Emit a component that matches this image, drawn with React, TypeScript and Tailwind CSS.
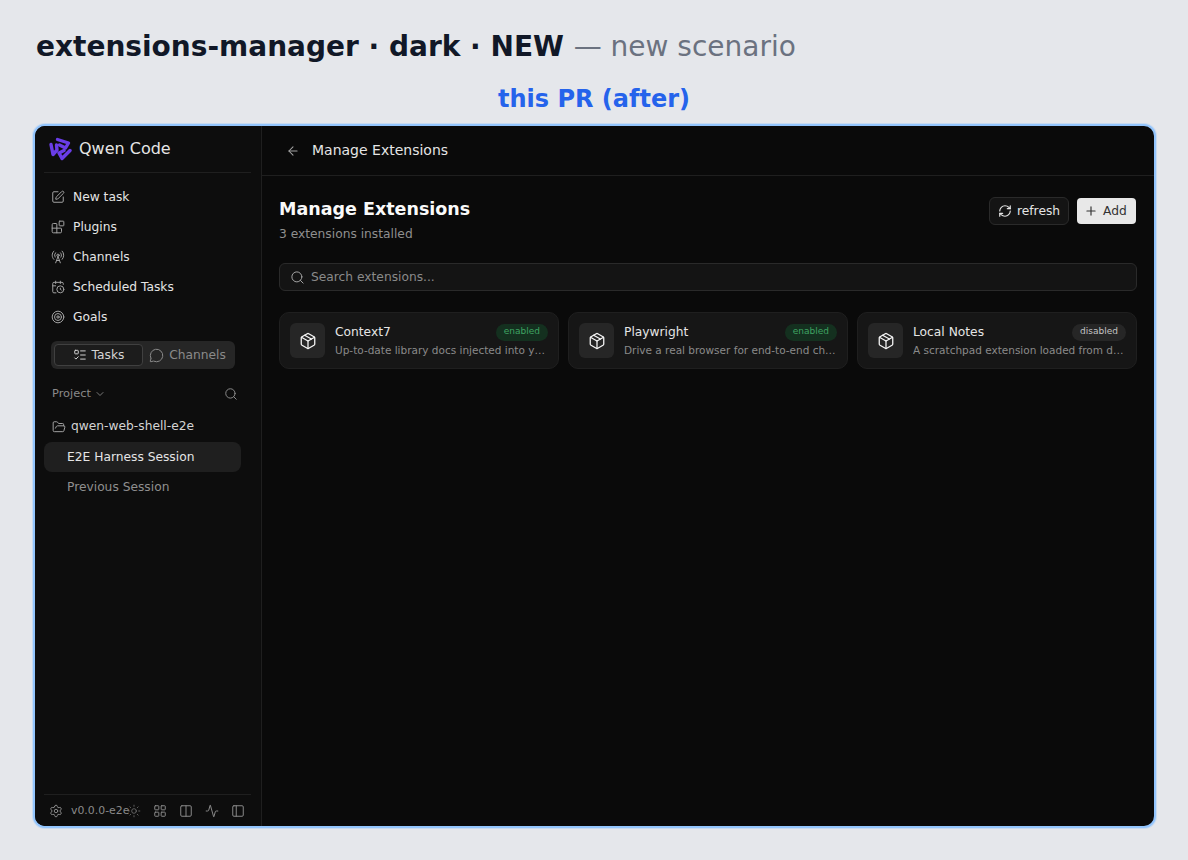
import { ArrowLeft, Search, ChevronDown, SquarePen, Blocks, RadioTower, CalendarClock, Target, ListTodo, MessageCircle, FolderOpen, Settings, Sun, LayoutGrid, Columns2, Activity, PanelLeft, RefreshCw, Plus, Package } from "lucide-react";

const font = { fontFamily: '"DejaVu Sans", sans-serif' };

const nav = [
  { icon: SquarePen, label: "New task" },
  { icon: Blocks, label: "Plugins" },
  { icon: RadioTower, label: "Channels" },
  { icon: CalendarClock, label: "Scheduled Tasks" },
  { icon: Target, label: "Goals" },
];

const exts = [
  { name: "Context7", desc: "Up-to-date library docs injected into your prompts", on: true },
  { name: "Playwright", desc: "Drive a real browser for end-to-end checks and more", on: true },
  { name: "Local Notes", desc: "A scratchpad extension loaded from disk on startup", on: false },
];

function Logo() {
  return (
    <svg width="24" height="24" viewBox="0 0 24 24" fill="none" className="shrink-0">
      <g stroke="#6a3de8" strokeWidth="3.4" strokeLinejoin="round" strokeLinecap="round">
        <path d="M9.5 2.5 L20.5 6 L17.5 11 L11.5 8" />
        <path d="M22 13.5 L14 21.5 L11 16 L16 13.5" />
        <path d="M3 7.5 L5 17.5 L9 13 L8.5 8" />
      </g>
    </svg>
  );
}

export default function App() {
  return (
    <div className="w-[1188px] h-[860px] bg-[#e5e7eb] flex flex-col overflow-hidden px-[33px]" style={font}>
      <h1 className="mt-[27px] ml-[3px] h-[40px] text-[28px] leading-[40px] text-[#111827] font-bold whitespace-nowrap">
        extensions-manager · dark · NEW <span className="font-normal text-[#6b7280]">— new scenario</span>
      </h1>
      <div className="mt-[18px] h-[28px] text-[24px] leading-[28px] font-bold text-[#2563eb] text-center whitespace-nowrap">this PR (after)</div>
      <div className="mt-[11px] w-[1123px] h-[704px] border-2 border-[#93c5fd] rounded-[12px] bg-[#0a0a0a] flex shadow-[0_0_0_1px_rgba(147,197,253,0.35)]">
        <aside className="w-[227px] shrink-0 bg-[#0d0d0d] rounded-l-[10px] border-r border-[#1f1f1f] flex flex-col pl-[9px] pr-[10px]">
          <div className="h-[47px] shrink-0 border-b border-[#1f1f1f] flex items-center gap-[7px] px-[4px]">
            <Logo />
            <span className="text-[16px] text-[#e5e5e5]">Qwen Code</span>
          </div>
          <div className="mt-[9px] flex flex-col">
            {nav.map((n) => (
              <div key={n.label} className="h-[30px] flex items-center gap-[8px] px-[7px]">
                <n.icon size={14} strokeWidth={1.7} className="text-[#a3a3a3]" />
                <span className="text-[12.25px] text-[#e5e5e5]">{n.label}</span>
              </div>
            ))}
          </div>
          <div className="mt-[9px] ml-[7px] w-[184px] h-[28px] rounded-[6px] bg-[#262626] flex items-center p-[3px]">
            <div className="w-[89px] h-[22px] rounded-[4px] bg-[#1c1c1c] border border-[#404040] flex items-center justify-center gap-[5px] text-[12.25px] text-[#d4d4d4]">
              <ListTodo size={14} strokeWidth={1.7} />Tasks
            </div>
            <div className="flex-1 flex items-center justify-center gap-[5px] text-[12.25px] text-[#8a8a8a] whitespace-nowrap">
              <MessageCircle size={15} strokeWidth={1.6} />Channels
            </div>
          </div>
          <div className="mt-[15px] pl-[8px] pr-[13px] h-[20px] flex items-center justify-between">
            <span className="text-[11.375px] text-[#8a8a8a] flex items-center gap-[3px]">Project <ChevronDown size={12} strokeWidth={1.7} /></span>
            <Search size={14} strokeWidth={1.7} className="text-[#8a8a8a]" />
          </div>
          <div className="mt-[7px] h-[31px] px-[8px] flex items-center gap-[5px] text-[12.25px] text-[#d4d4d4]">
            <FolderOpen size={14} strokeWidth={1.7} className="text-[#a3a3a3]" />qwen-web-shell-e2e
          </div>
          <div className="w-[197px] h-[30px] rounded-[8px] bg-[#1f1f1f] flex items-center pl-[23px] text-[12.25px] text-[#e5e5e5]">E2E Harness Session</div>
          <div className="w-[197px] h-[30px] flex items-center pl-[23px] text-[12.25px] text-[#8f8f8f]">Previous Session</div>
          <div className="mt-auto h-[32px] shrink-0 border-t border-[#1f1f1f] flex items-center pl-[5px] text-[#8a8a8a]">
            <Settings size={14} strokeWidth={1.7} />
            <span className="ml-[8px] pt-[1px] text-[10.9px] whitespace-nowrap w-[56px]">v0.0.0-e2e</span>
            <Sun size={14} strokeWidth={1.1} />
            <LayoutGrid size={14} strokeWidth={1.7} className="ml-[12px]" />
            <Columns2 size={14} strokeWidth={1.7} className="ml-[12px]" />
            <Activity size={14} strokeWidth={1.7} className="ml-[12px]" />
            <PanelLeft size={14} strokeWidth={1.7} className="ml-[12px]" />
          </div>
        </aside>
        <main className="flex-1 min-w-0 flex flex-col">
          <div className="h-[50px] shrink-0 border-b border-[#1f1f1f] flex items-center pl-[24px] gap-[12px]">
            <ArrowLeft size={14} strokeWidth={1.8} className="text-[#a3a3a3]" />
            <span className="text-[14px] text-[#e5e5e5]">Manage Extensions</span>
          </div>
          <div className="px-[17px] pt-[21px] flex flex-col">
            <div className="flex items-start justify-between h-[46px]">
              <div>
                <div className="text-[17.5px] leading-[24px] font-bold text-[#fafafa]">Manage Extensions</div>
                <div className="mt-[4px] text-[12.25px] leading-[18px] text-[#8f8f8f]">3 extensions installed</div>
              </div>
              <div className="flex items-center gap-[8px]">
                <div className="h-[28px] w-[80px] pl-[8px] rounded-[6px] bg-[#141414] border border-[#2a2a2a] flex items-center gap-[5px] text-[12.25px] text-[#e5e5e5]">
                  <RefreshCw size={14} strokeWidth={2} />refresh
                </div>
                <div className="h-[26px] w-[59px] mr-[1px] pl-[7px] rounded-[4px] bg-[#e8e8e8] flex items-center gap-[5px] text-[12.25px] text-[#333]">
                  <Plus size={14} strokeWidth={2} />Add
                </div>
              </div>
            </div>
            <div className="mt-[20px] h-[28px] rounded-[6px] bg-[#141414] border border-[#2a2a2a] flex items-center pl-[10px] pr-[10px] gap-[6px] text-[12.25px] text-[#8a8a8a]">
              <Search size={15} strokeWidth={1.6} className="text-[#a3a3a3]" /><span className="pt-[1px]">Search extensions...</span>
            </div>
            <div className="mt-[21px] grid grid-cols-3 gap-[9px]">
              {exts.map((e) => (
                <div key={e.name} className="h-[57px] rounded-[10px] bg-[#161616] border border-[#1f1f1f] flex items-center pl-[10px] pr-[10px] gap-[10px] min-w-0">
                  <div className="w-[35px] h-[35px] shrink-0 rounded-[6px] bg-[#262626] flex items-center justify-center text-[#f5f5f5]">
                    <Package size={18} strokeWidth={1.7} />
                  </div>
                  <div className="flex-1 min-w-0">
                    <div className="flex items-center justify-between h-[18px]">
                      <span className="text-[12.25px] text-[#e5e5e5]">{e.name}</span>
                      <span className={`h-[17px] px-[8px] rounded-full text-[9px] flex items-center ${e.on ? "bg-[#14301f] text-[#3fa362]" : "bg-[#262626] text-[#c4c4c4]"}`}>{e.on ? "enabled" : "disabled"}</span>
                    </div>
                    <div className="mt-[1px] text-[10.5px] leading-[16px] text-[#8a8a8a] truncate">{e.desc}</div>
                  </div>
                </div>
              ))}
            </div>
          </div>
        </main>
      </div>
    </div>
  );
}
